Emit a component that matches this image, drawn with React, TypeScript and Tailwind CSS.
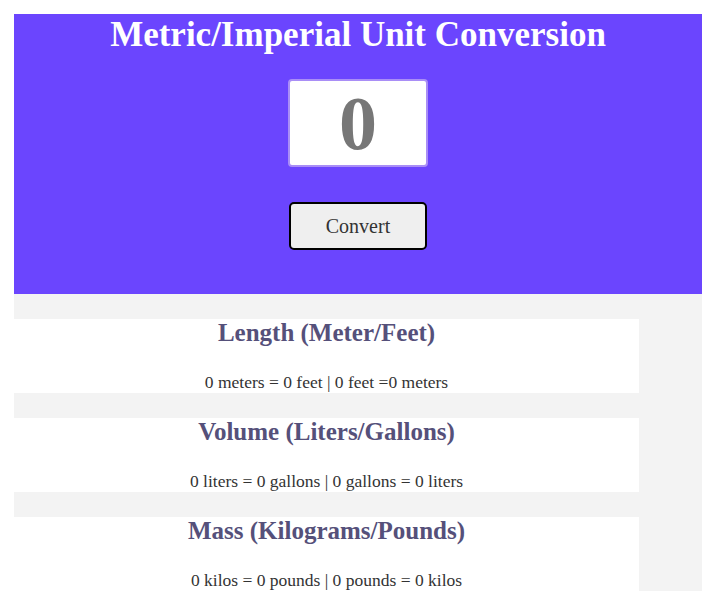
import React from 'react';

const serif = { fontFamily: '"Liberation Serif", "Times New Roman", serif' };

const sections = [
  { title: 'Length (Meter/Feet)', text: '0 meters = 0 feet | 0 feet =0 meters' },
  { title: 'Volume (Liters/Gallons)', text: '0 liters = 0 gallons | 0 gallons = 0 liters' },
  { title: 'Mass (Kilograms/Pounds)', text: '0 kilos = 0 pounds | 0 pounds = 0 kilos' },
];

export default function App() {
  return (
    <div className="min-h-screen bg-white pt-[14px] pl-[14px]" style={serif}>
      <div className="w-[688px]">
        {/* Header */}
        <div className="h-[280px] bg-[#6b45fe] flex flex-col items-center">
          <h1 className="text-[35px] leading-[40px] font-bold text-white mt-[1px]">
            Metric/Imperial Unit Conversion
          </h1>
          <input
            type="text"
            defaultValue="0"
            className="mt-[24px] w-[140px] h-[88px] bg-white border-2 border-[#a98ef6] rounded-[4px] text-center text-[76px] font-bold text-[#777777] outline-none"
            style={serif}
          />
          <button
            className="mt-[35px] w-[138px] h-[48px] bg-[#efefef] border-2 border-black rounded-[5px] text-[20px] text-[#333333]"
            style={serif}
          >
            Convert
          </button>
        </div>

        {/* Results */}
        <div className="bg-[#f3f3f3] pt-[25px] flex flex-col gap-[25px]">
          {sections.map((s) => (
            <div key={s.title} className="w-[625px] h-[74px] bg-white flex flex-col items-center">
              <h2 className="text-[25px] leading-[28px] font-bold text-[#55507a]">{s.title}</h2>
              <p className="mt-[25px] text-[17.5px] leading-[20px] text-[#333333]">{s.text}</p>
            </div>
          ))}
        </div>
      </div>
    </div>
  );
}
